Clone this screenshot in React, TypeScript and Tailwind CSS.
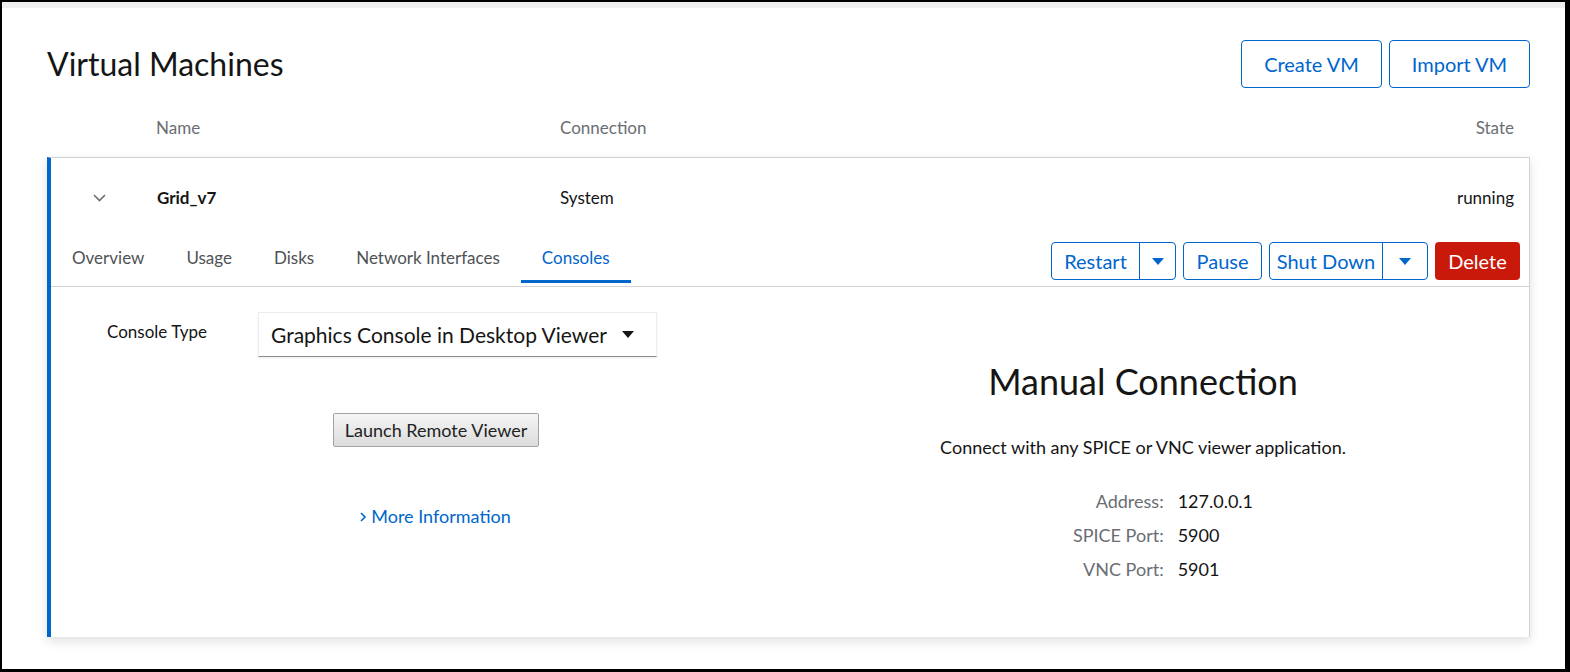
const font = { fontFamily: "Lato, 'Liberation Sans', sans-serif" };

function Caret({ className }: { className?: string }) {
  return (
    <svg width="12" height="7" viewBox="0 0 12 7" className={className}>
      <path d="M0 0h12L6 7z" fill="currentColor" />
    </svg>
  );
}

export default function App() {
  const tabs = ["Overview", "Usage", "Disks", "Network Interfaces", "Consoles"];

  return (
    <div
      className="h-[672px] w-[1570px] overflow-hidden border-l-2 border-t-2 border-r-[5px] border-b-[3px] border-black bg-white text-[#151515]"
      style={font}
    >
      <div className="h-[6px] bg-[#f0f0f0]" />
      <div className="pl-[45px] pr-[35px]">
        {/* header */}
        <div className="mt-[32px] flex h-[48px] items-center justify-between">
          <h1 className="text-[32px] leading-none">Virtual Machines</h1>
          <div className="flex gap-[7px]">
            <button className="h-[48px] w-[141px] rounded-[4px] border border-[#0066cc] text-[20px] text-[#0066cc]">
              Create VM
            </button>
            <button className="h-[48px] w-[141px] rounded-[4px] border border-[#0066cc] text-[20px] text-[#0066cc]">
              Import VM
            </button>
          </div>
        </div>

        {/* column headers */}
        <div className="flex pt-[28px] pb-[17px] pr-[16px] text-[17px] leading-6 text-[#6a6e73]">
          <span className="w-[513px] pl-[109px]">Name</span>
          <span className="flex-1">Connection</span>
          <span>State</span>
        </div>

        {/* card */}
        <div className="h-[480px] border-t border-r border-[#d2d2d2] border-l-4 border-l-[#0066cc] shadow-[0_4px_10px_rgba(0,0,0,0.13)]">
          <div className="flex h-[76px] items-center pt-[4px] pr-[15px] text-[17px]">
            <span className="flex w-[106px] pl-[42px]">
              <svg width="13" height="8" viewBox="0 0 13 8">
                <path d="M1 1l5.5 5.5L12 1" stroke="#6a6e73" strokeWidth="1.6" fill="none" />
              </svg>
            </span>
            <span className="w-[403px] font-bold">Grid_v7</span>
            <span className="flex-1">System</span>
            <span>running</span>
          </div>

          {/* tabs + actions */}
          <div className="flex items-start justify-between border-b border-[#d2d2d2] pb-[3px] pr-[9px]">
            <div className="flex">
              {tabs.map((t) => (
                <div
                  key={t}
                  className={
                    t === "Consoles"
                      ? "flex h-[49px] items-center border-b-[3px] border-[#0066cc] px-[21px] pt-[2px] text-[17px] text-[#0066cc]"
                      : "flex h-[49px] items-center border-b-[3px] border-transparent px-[21px] pt-[2px] text-[17px] text-[#4f5255]"
                  }
                >
                  {t}
                </div>
              ))}
            </div>
            <div className="mt-[8px] flex gap-[7px] text-[20px] text-[#0066cc]">
              <div className="flex h-[38px] rounded-[4px] border border-[#0066cc]">
                <span className="flex w-[88px] items-center justify-center border-r border-[#0066cc]">Restart</span>
                <span className="flex w-[35px] items-center justify-center">
                  <Caret />
                </span>
              </div>
              <button className="h-[38px] w-[79px] rounded-[4px] border border-[#0066cc]">Pause</button>
              <div className="flex h-[38px] rounded-[4px] border border-[#0066cc]">
                <span className="flex w-[113px] items-center justify-center border-r border-[#0066cc]">Shut Down</span>
                <span className="flex w-[44px] items-center justify-center">
                  <Caret />
                </span>
              </div>
              <button className="h-[38px] w-[85px] rounded-[4px] bg-[#c9190b] text-white">Delete</button>
            </div>
          </div>

          {/* console body */}
          <div className="flex">
            <div className="w-[770px] pt-[25px]">
              <div className="flex items-start">
                <span className="w-[207px] pl-[56px] pt-[7px] text-[17px]">Console Type</span>
                <div className="flex h-[45px] w-[399px] items-center justify-between border border-[#ededed] border-b-[#8a8d90] pl-[12px] pr-[22px] text-[21px] shadow-[0_1px_2px_rgba(0,0,0,0.08)]">
                  <span>Graphics Console in Desktop Viewer</span>
                  <Caret />
                </div>
              </div>
              <div className="mt-[56px] flex justify-center">
                <button className="h-[34px] w-[206px] rounded-[2px] border border-[#a3a3a3] bg-gradient-to-b from-[#f5f5f5] to-[#dcdcdc] text-[18px] text-[#222]">
                  Launch Remote Viewer
                </button>
              </div>
              <div className="mt-[56px] flex items-center justify-center gap-[4px] pr-[2px] text-[18px] text-[#0066cc]">
                <svg width="8" height="12" viewBox="0 0 8 12">
                  <path d="M2 2l4 4-4 4" stroke="#0066cc" strokeWidth="1.6" fill="none" />
                </svg>
                <span>More Information</span>
              </div>
            </div>
            <div className="flex flex-1 flex-col items-center pr-[64px] pt-[72px]">
              <h2 className="text-[36px] leading-[44px]">Manual Connection</h2>
              <p className="mt-[32px] text-[18px] leading-6">Connect with any SPICE or VNC viewer application.</p>
              <div className="mt-[30px] grid grid-cols-[auto_auto] gap-x-[14px] gap-y-[10px] pl-[40px] text-[18px] leading-6">
                <span className="text-right text-[#6a6e73]">Address:</span>
                <span>127.0.0.1</span>
                <span className="text-right text-[#6a6e73]">SPICE Port:</span>
                <span>5900</span>
                <span className="text-right text-[#6a6e73]">VNC Port:</span>
                <span>5901</span>
              </div>
            </div>
          </div>
        </div>
      </div>
    </div>
  );
}
